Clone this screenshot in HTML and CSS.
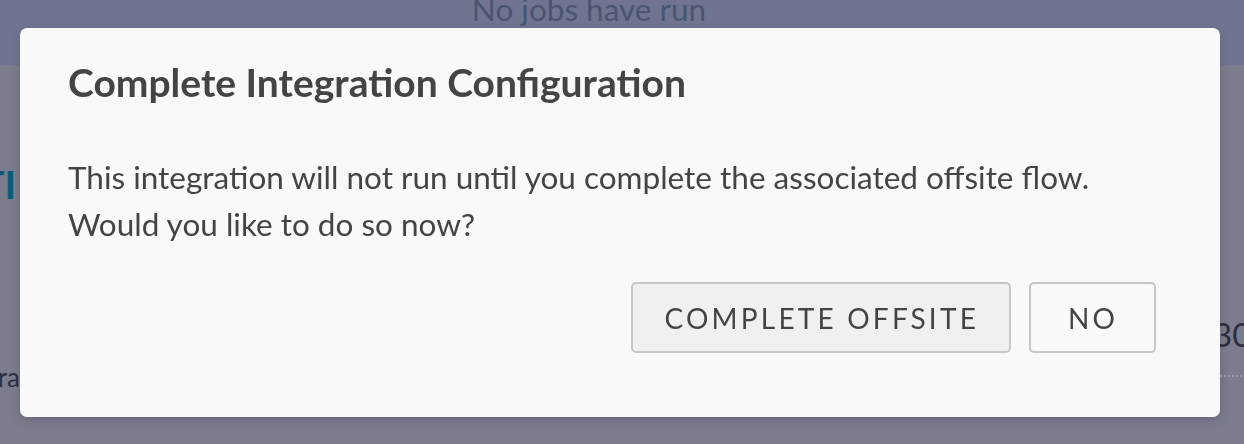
FILE: index.html
```html
<!DOCTYPE html>
<html>
<head>
<meta charset="utf-8">
<link rel="stylesheet" href="styles.css">
</head>
<body>
<div class="page">
  <header class="jobs-bar">
    <span class="jobs-empty">No jobs have run</span>
  </header>
  <main class="content">
    <div class="content-left">
      <h2 class="section-title">ACTI</h2>
      <p class="section-label">Integra</p>
    </div>
    <div class="content-right">
      <span class="stat-value">30</span>
    </div>
  </main>
</div>
<div class="overlay">
  <div class="modal" role="dialog">
    <h1 class="modal-title">Complete Integration Configuration</h1>
    <p class="modal-text">This integration will not run until you complete the associated offsite flow.<br>Would you like to do so now?</p>
    <div class="modal-actions">
      <button class="btn btn-primary">COMPLETE OFFSITE</button>
      <button class="btn btn-secondary">NO</button>
    </div>
  </div>
</div>
</body>
</html>
```
FILE: styles.css
```css
* { box-sizing: border-box; }
html, body { margin: 0; padding: 0; }
body {
  width: 1244px;
  height: 444px;
  overflow: hidden;
  background: #7b7d8f;
  font-family: Lato, "Noto Sans", sans-serif;
}
.page {
  display: flex;
  flex-direction: column;
  height: 444px;
}
.jobs-bar {
  height: 65px;
  background: #6f7590;
  display: flex;
  justify-content: center;
  align-items: flex-start;
  overflow: hidden;
}
.jobs-empty {
  font-size: 31.5px;
  line-height: 37.8px;
  margin-top: -9px;
  color: #4a5572;
  margin-left: -66px;
}
.content {
  flex: 1;
  display: flex;
  justify-content: space-between;
}
.content-left {
  width: 300px;
  margin-left: -280px;
  padding-top: 96px;
  text-align: right;
}
.section-title {
  margin: 0;
  padding-right: 4px;
  font-size: 39px;
  line-height: 47px;
  font-weight: 700;
  color: #0b5a78;
  white-space: nowrap;
}
.section-label {
  margin: 154px 0 0 0;
  font-size: 26px;
  line-height: 31px;
  color: #2c2f42;
  white-space: nowrap;
}
.content-right {
  width: 60px;
  padding-top: 249px;
  margin-right: -29px;
}
.stat-value {
  display: block;
  font-size: 33px;
  line-height: 40px;
  color: #2c2f42;
  padding-bottom: 21px;
  border-bottom: 2px dotted #9a9cae;
}
.overlay {
  position: fixed;
  inset: 0;
}
.modal {
  position: absolute;
  left: 20px;
  top: 28px;
  width: 1200px;
  height: 389px;
  background: #f9f9f9;
  border-radius: 7px;
  box-shadow: 0 3px 8px rgba(40, 40, 60, 0.25);
  padding: 30px 64px 64px 48px;
  display: flex;
  flex-direction: column;
  color: #444444;
}
.modal-title {
  margin: 0;
  font-size: 39px;
  font-weight: 700;
  line-height: 48px;
}
.modal-text {
  margin: 48px 0 0 0;
  font-size: 31.5px;
  line-height: 47px;
}
.modal-actions {
  margin-top: auto;
  display: flex;
  justify-content: flex-end;
  gap: 18px;
}
.btn {
  height: 71px;
  padding: 0 30px 0 31px;
  min-width: 127px;
  font-family: Lato, "Noto Sans", sans-serif;
  font-size: 28px;
  letter-spacing: 3.2px;
  color: #444444;
  border: 2px solid #c6c6c6;
  border-radius: 5px;
  cursor: pointer;
}
.btn-primary { background: #f0f0f0; }
.btn-secondary { background: #f9f9f9; }
```
